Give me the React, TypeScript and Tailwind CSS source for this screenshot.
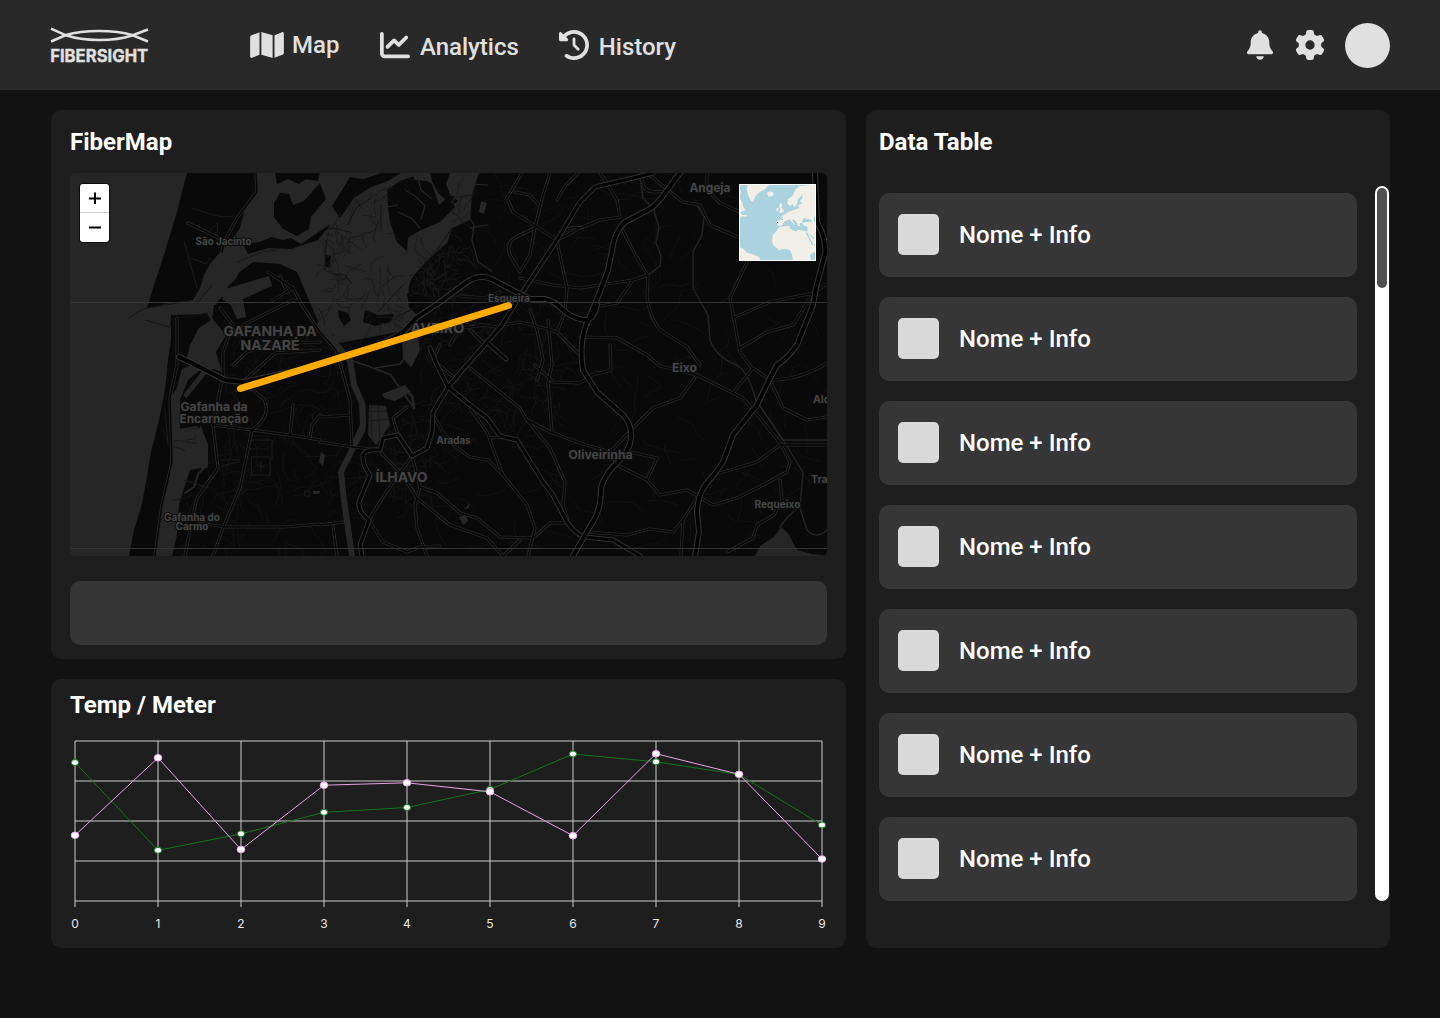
import React from 'react';
import { FaMap, FaChartLine, FaClockRotateLeft, FaBell, FaGear } from 'react-icons/fa6';

type Pt = [number, number];

/* ---------- map data (x/y share the coordinates of the 1440px artboard) ---------- */

const motorways = [
  'M179 357 L192 363 L225 380 L243 382 L300 370 L350 354 L380 345 L403 332 L416 318 L440 302 L467 282 Q482 272 497 282 L520 294 L530 299 L545 299 Q555 301 563 310 Q572 318 584 320 Q594 320 597 305',
  'M680 173 L665 193 Q656 206 648 210 L625 222 Q616 230 613 245 L608 270 L596 302 L586 325 Q579 345 583 370 L597 392 L623 415 Q632 424 631 438 Q630 450 617 463 Q604 475 601 488 Q601 508 594 520 L585 535 L573 556',
  'M815 173 L817 222 Q827 240 825 254 L816 288 L813 305 L797 345 Q788 358 777 365 L770 378 L757 405 L733 435 L723 462 Q716 473 706 484 Q698 494 697 512 L699 532 L695 556',
];

const trunkRoads = [
  'M653 173 L633 178 L595 187 L580 202 L557 240 L522 293 L502 325 L467 365 L448 387 L433 412 L432 432 L427 448 L412 456 L398 435 L383 438 L380 450 Q366 449 363 455 Q362 464 370 475 L359 502 Q358 512 369 520 L360 545 L362 556',
  'M430 348 L437 365 L448 387 L470 405 L487 418 L500 436 L517 440 L543 482 L553 495 L567 522 Q575 534 585 537 L613 540 L640 556',
  'M489 344 L506 359',
];

const minorRoads = [
  'M550 173 L543 195 L535 227 L530 255 L520 272 L510 255 Q505 242 518 236 L537 227',
  'M522 173 L507 198 L513 212 L537 227 L557 240 L562 265 L567 288 L565 312 L557 332 L580 355',
  'M520 278 L553 285 L580 288 L633 280 L648 275',
  'M578 173 L565 186 L557 200 M557 240 L580 228 L600 220 L620 217 L617 200 L605 180 L600 173',
  'M515 192 L530 195 L540 206 M564 231 Q572 226 580 228',
  'M470 368 L520 408 L527 420 L550 432 L580 443 L610 452',
  'M527 420 L550 448 L565 482 L563 505 L568 520',
  'M548 320 L552 365 L548 382 L552 432 M535 365 L553 382 L580 383 L597 372',
  'M433 415 L443 432 L453 445 L470 457 L488 460 L503 475 L527 505 L535 528 L528 556',
  'M470 408 L487 432 L503 475 M490 438 L503 437',
  'M412 456 L400 472 L385 494 L369 520 M380 452 L400 472 L417 498 L450 525 L487 538 L503 556',
  'M412 456 L420 487 L437 493 L460 513 L477 518 L500 537 L533 538 L550 523 L567 523',
  'M420 487 L415 505 L417 528 L427 556 M398 435 L393 418 L407 407',
  'M369 520 L383 542 L407 552 L420 547 L440 546 M503 556 L520 540',
  'M320 417 L350 415 M320 442 L353 447 L380 450 M320 525 L343 522 M333 526 L337 556',
  'M213 425 L252 430 L290 435 L320 440 M252 430 L240 488 L223 528 L213 556',
  'M188 522 L227 527 L285 527 L320 524 M223 375 L213 425 L218 468 L197 498 L193 515 L185 556',
  'M177 318 L177 365 L170 398 L172 462 L162 505 L155 556',
  'M243 382 L264 399 Q272 417 252 430 M310 438 L312 425 L320 415 M293 405 L290 435',
  'M256 173 L257 192 L237 218 L225 240 L222 252 M188 223 L223 240',
  'M268 272 L293 288 L300 302 L320 332 L336 350 L342 370 L350 400 L352 445 M273 300 L293 288 M280 276 L286 290',
  'M220 308 L233 325 L223 352 L223 375 M243 325 L293 300 L300 302 M233 365 L247 352 L270 344 L320 342 M243 382 L275 353 L320 350',
  'M620 225 L637 258 L648 275 L647 298 Q650 318 660 330 L687 347 L700 365',
  'M668 190 L683 202 L700 205 L710 225 L740 238 L747 262 L730 298 L740 352 L752 368',
  'M647 173 L668 190 Q650 195 644 187 L640 173 M707 173 L707 190 L720 203 L740 212',
  'M733 318 L770 302 L813 293 L827 284 M740 348 L767 332 L793 325 L813 293',
  'M595 307 L617 303 L633 280 M580 337 L617 338 L647 355 L660 366 L697 375 L743 398 L760 418 L780 443 L790 462 L787 472 L763 485 L737 498 L713 505 L687 490 L660 495 L647 480 L617 465',
  'M713 475 L757 462 L780 445 L827 445 M697 375 L680 398 L653 408 L633 428 L610 452 L617 465 M630 452 L657 458 L647 480',
  'M587 532 L627 535 L650 529 L673 532 L683 520 L697 498 M683 520 L681 556',
  'M770 380 L783 408 L807 420 L827 417 M733 393 L753 368 L770 380 Q800 380 827 363',
  'M727 552 L753 538 L757 525 L774 515 L782 500 L780 480 M610 345 L611 370 L597 374',
  'M487 325 L460 328 L450 345 M440 345 L433 360 L457 380 M452 320 L502 328 M470 330 L486 345 M460 296 L485 298 L500 292 M485 345 L475 335',
  'M502 325 L520 322 L540 327 L557 332 M530 310 L537 330 L543 360 L537 380',
];

const rivers = [
  'M640 178 L643 198 L654 210 L659 228 L656 243 L661 256 L660 266 L648 275 L647 298 L651 318 L660 330 L687 347 L700 365',
  'M697 205 L704 217 L702 235 L693 252 L693 288 L708 315 L710 340 Q717 358 737 365 Q748 372 756 400 L783 440 L827 440',
  'M756 400 L783 440 L803 472 L800 508 L807 530 Q817 540 827 530',
  'M780 527 L787 518 L797 508',
];

const landMasses = [
  'M187 173 L256 173 L258 190 L244 212 L240 228 L232 240 L222 250 L210 264 L204 275 L200 288 L193 300 L170 303 L147 308 L155 282 L164 255 L176 215 Z',
  'M171 315 L207 314 L211 320 L199 328 L190 345 L187 357 L194 364 L182 369 L176 390 L170 398 L172 440 L169 480 L163 505 L160 530 L155 556 L129 556 L134 530 L142 504 L147 476 L151 452 L159 420 L165 390 L168 360 L171 340 Z',
  'M232 278 L253 262 L280 264 L297 272 L308 298 L320 325 L334 344 L350 341 L397 332 L411 330 L421 316 L410 298 Q405 285 416 273 L430 258 L447 243 L452 228 L470 220 L472 195 L479 173 L827 173 L827 556 L172 556 L177 535 L179 505 L184 488 L190 470 L206 467 L208 445 L200 428 L180 430 L180 400 L188 380 L205 366 L222 372 L216 352 L226 335 L212 318 L214 305 L224 295 Z',
  'M275 173 L320 173 L318 181 L306 179 L299 184 L288 179 L277 184 Z',
  'M274 203 L280 193 L289 194 L293 205 L304 201 L320 183 L326 199 L311 217 L309 229 L297 236 L283 229 L274 217 Z',
  'M243 244 L259 242 L272 237 L283 240 L291 238 L301 244 L323 229 L331 224 L318 240 L291 249 L269 248 L248 254 Z',
  'M222 263 L225 262 L227 266 L222 273 L219 270 Z',
  'M332 206 L344 187 L350 177 L363 179 L382 173 L401 173 L388 181 L371 187 L354 198 L340 218 Z',
  'M387 190 L400 181 L417 175 L432 184 L439 205 L448 197 L455 207 L440 222 L419 231 L408 238 L407 251 L397 242 L390 222 L388 207 Z',
  'M430 173 L450 173 L446 184 L450 194 L458 201 L453 205 L439 194 L432 181 Z',
  'M338 310 L348 313 L351 320 L344 326 L339 318 Z',
  'M365 310 L378 315 L394 314 L391 322 L375 326 L363 322 Z',
  'M325 255 L331 256 L330 268 L325 266 Z',
  'M407 293 L413 294 L416 306 L423 314 L418 316 L409 307 Z',
];

const waterBodies = [
  'M222 290 L269 276 L272 286 L243 299 L246 317 L237 319 L231 305 L223 300 Z',
  'M236 255 L245 262 L235 280 L222 291 L210 300 L198 308 L207 282 L222 262 Z',
  'M201 426 L208 445 L208 467 L202 470 L197 455 L196 430 Z',
  'M369 405 L386 406 L390 425 L376 445 L368 435 Z',
  'M382 394 L405 385 L411 392 L395 401 L384 398 Z',
  'M402 340 L417 332 L420 350 L411 368 L403 358 Z',
  'M321 452 L325 455 L323 466 L319 462 Z',
  'M459 517 L466 515 L468 521 L463 525 Z M464 509 L470 503 L469 508 Z',
  'M755 556 L760 546 L774 537 L781 527 L788 533 L797 550 L812 554 L827 556 Z',
  'M313 491 L320 491 L319 494 L313 494 Z M412 173 L430 173 L426 181 L415 180 Z',
  'M481 201 L487 203 L484 214 L479 212 Z',
];

const labels: { t: string; x: number; y: number; s: number; w: number }[] = [
  { t: 'São Jacinto', x: 223.5, y: 245.3, s: 10, w: 56 },
  { t: 'GAFANHA DA', x: 270, y: 336, s: 13.5, w: 93 },
  { t: 'NAZARÉ', x: 270, y: 350, s: 13.5, w: 59 },
  { t: 'Esqueira', x: 509, y: 301.5, s: 10, w: 42 },
  { t: 'AVEIRO', x: 437.5, y: 332.5, s: 13.5, w: 54 },
  { t: 'Angeja', x: 710, y: 192, s: 12, w: 41 },
  { t: 'Gafanha da', x: 214, y: 411, s: 11.5, w: 67 },
  { t: 'Encarnação', x: 214, y: 423, s: 11.5, w: 69 },
  { t: 'Gafanha do', x: 192, y: 520.5, s: 10, w: 56 },
  { t: 'Carmo', x: 192, y: 530, s: 10, w: 33 },
  { t: 'Aradas', x: 453.5, y: 443.5, s: 10.5, w: 34 },
  { t: 'ÍLHAVO', x: 401.5, y: 482.3, s: 13.5, w: 52 },
  { t: 'Eixo', x: 684.5, y: 372, s: 11.5, w: 25 },
  { t: 'Oliveirinha', x: 600.5, y: 459, s: 12, w: 64 },
  { t: 'Requeixo', x: 777.5, y: 507.5, s: 10.5, w: 46 },
];

/* Deterministic short street segments that fill the built-up areas. */
function streets(seed: number, count: number, x0: number, y0: number, x1: number, y1: number, step: number): string {
  let s = seed;
  const rnd = () => {
    s = (s * 16807) % 2147483647;
    return s / 2147483647;
  };
  let d = '';
  for (let i = 0; i < count; i++) {
    let x = x0 + rnd() * (x1 - x0);
    let y = y0 + rnd() * (y1 - y0);
    let a = (Math.floor(rnd() * 4) * Math.PI) / 2 + 0.5 + (rnd() - 0.5) * 0.5;
    d += `M${x.toFixed(1)} ${y.toFixed(1)}`;
    const n = 2 + Math.floor(rnd() * 4);
    for (let k = 0; k < n; k++) {
      a += (rnd() - 0.5) * 1.3;
      x += Math.cos(a) * step * (0.4 + rnd());
      y += Math.sin(a) * step * (0.4 + rnd());
      d += `L${x.toFixed(1)} ${y.toFixed(1)}`;
    }
  }
  return d;
}

const faintStreets = [
  streets(11, 190, 430, 180, 820, 550, 9),
  streets(29, 70, 225, 320, 335, 410, 7),
  streets(41, 60, 225, 425, 345, 550, 8),
  streets(53, 110, 420, 310, 560, 420, 6),
  streets(67, 60, 370, 430, 440, 510, 7),
  streets(71, 26, 185, 400, 245, 550, 7),
].join('');

const marshLines = [
  streets(5, 26, 325, 228, 352, 272, 5),
  streets(7, 26, 330, 270, 395, 310, 5),
  streets(13, 70, 416, 250, 462, 300, 4.5),
  streets(17, 18, 350, 195, 395, 240, 5),
  streets(19, 16, 370, 290, 405, 330, 5),
  streets(23, 12, 458, 180, 476, 270, 4),
].join('');

function FiberMap() {
  return (
    <div className="relative h-[383px] w-[757px] overflow-hidden rounded-[5px] bg-[#262626]">
      <svg className="block h-full w-full" viewBox="70 173 757 383" fill="none" strokeLinejoin="round" strokeLinecap="round">
        <g fill="#090909">
          {landMasses.map((d) => <path key={d} d={d} />)}
        </g>
        <path d={faintStreets} stroke="#141414" strokeWidth="0.8" />
        <g stroke="#262626">
          <path d="M320 325 L340 349 L350 360 L354 385 L362 403 L363 425 L352 450 L341 472 L344 500 L352 556" strokeWidth="6" />
          <path d="M363 405 L363 430 L356 443" strokeWidth="5" />
          <path d="M350 360 L368 366 L391 375 L401 390 L414 408 M375 368 L400 364 L411 350" strokeWidth="1.6" />
          <path d="M404 389 L412 396 L414 408" strokeWidth="2.5" />
          <path d="M178 430 L197 427 M205 467 L198 474 L194 487 L185 493 M197 456 L188 460" strokeWidth="2" />
          <path d="M186 395 L203 374 L212 366" strokeWidth="5" />
        </g>
        <g fill="#262626">
          {waterBodies.map((d) => <path key={d} d={d} />)}
        </g>
        <path d="M368 412 L388 411 M371 405 L372 440 M368 421 L389 419 M378 406 L380 438" stroke="#141414" strokeWidth="0.8" />
        <path d="M128 319 L145 311 L172 306 L215 303" stroke="#262626" strokeWidth="4" />
        <path d="M128 319 L137 312 L147 308 L190 301 M145 320 L170 327 L171 319 L208 313 M198 302 L212 285 M238 262 L262 252 L276 250" stroke="#111" strokeWidth="0.8" />
        <path d={marshLines} stroke="#191919" strokeWidth="0.8" />
        <path d="M325 230 L332 228 L350 232 M326 240 L325 270 L332 274 L345 275 L352 284 M348 225 L356 208 L371 198 M381 205 L381 228 M416 273 L437 250 L452 228 M403 285 L378 312 M395 318 L420 305" stroke="#131313" strokeWidth="1" />
        <path d="M463 175 L460 190 L452 202 L466 213 L474 225 L472 240 L478 262 L492 271 M470 184 L488 185 M470 228 L488 225" stroke="#262626" strokeWidth="1.2" />
        <path d="M385 198 L388 207 L398 205 M417 175 L421 190 L432 199 M405 190 L415 196 L425 206 L421 219 M398 212 L411 218 L420 228 M378 196 L380 230 L388 243" stroke="#242424" strokeWidth="1.2" />
        <g stroke="#1c1c1c" strokeWidth="1">
          <path d="M192 208 L213 215 L223 217 L233 216 M184 241 L197 288 M191 258 L206 264 L210 258 M208 232 L218 223 L216 241" />
          <path d="M252 457 H270 V475 H252 Z M257 466 H265 M261 461 V471 M250 440 L272 440 V460 M220 460 H240 M222 466 L238 462" />
          <path d="M184 480 L208 488 M165 410 L168 445 M305 491 h5 v5 h-5 z" />
        </g>
        <g stroke="#242424" strokeWidth="1.4">
          {rivers.map((d) => <path key={d} d={d} />)}
        </g>
        {minorRoads.map((d) => <path key={d} d={d} stroke="#262626" strokeWidth="3.2" />)}
        {minorRoads.map((d) => <path key={`c${d}`} d={d} stroke="#060606" strokeWidth="1.5" />)}
        {trunkRoads.map((d) => <path key={d} d={d} stroke="#2e2e2e" strokeWidth="5" />)}
        {trunkRoads.map((d) => <path key={`c${d}`} d={d} stroke="#020202" strokeWidth="3" />)}
        {motorways.map((d) => <path key={d} d={d} stroke="#303030" strokeWidth="6" />)}
        {motorways.map((d) => <path key={`c${d}`} d={d} stroke="#010101" strokeWidth="3.8" />)}
        <path d="M70 302.5 H827 M70 548.5 H827" stroke="#333333" strokeWidth="1" />
        <g
          className="font-['Inter'] font-bold"
          fill="#454545"
          stroke="#0e0e0e"
          strokeWidth="2"
          textAnchor="middle"
          style={{ paintOrder: 'stroke' }}
        >
          {labels.map((l) => (
            <text key={l.t} x={l.x} y={l.y} fontSize={l.s} textLength={l.w} lengthAdjust="spacingAndGlyphs">{l.t}</text>
          ))}
          <text x="813" y="402.5" fontSize="10.5" textAnchor="start">Alq</text>
          <text x="811" y="482.5" fontSize="10.5" textAnchor="start">Trav</text>
        </g>
        <path d="M240.5 388.5 L508.5 305.5" stroke="#ffab00" strokeWidth="7" />
      </svg>
      <div className="absolute left-[10px] top-[11px] flex h-[58px] w-[29px] flex-col rounded-[3px] bg-white shadow-[0_0_0_1px_#00000099]">
        <button className="flex h-[29px] items-center justify-center border-b border-[#ccc]">
          <svg className="h-3 w-3" viewBox="0 0 12 12" stroke="#000" strokeWidth="2"><path d="M0 6.5H12M6 0.5V12" /></svg>
        </button>
        <button className="flex h-[29px] items-center justify-center">
          <svg className="h-3 w-3" viewBox="0 0 12 12" stroke="#000" strokeWidth="2"><path d="M0 5.5H12" /></svg>
        </button>
      </div>
      <Overview />
    </div>
  );
}

function Overview() {
  return (
    <svg className="absolute left-[669px] top-[11px] h-[77px] w-[77px]" viewBox="477 57 231 231">
      <rect x="477" y="57" width="231" height="231" fill="#aad3df" />
      <g fill="#f2efe9">
        <path d="M504 57 L500 70 L505 92 L513 108 L519 110 L527 92 L540 80 L556 72 L562 64 L575 57 Z" />
        <path d="M560 84 L572 79 L582 84 L578 93 L566 95 Z" />
        <path d="M477 75 L483 77 L482 88 L477 90 Z M477 98 L486 110 L490 126 L497 136 L489 138 L480 142 L487 150 L502 149 L499 155 L485 154 L477 164 Z" />
        <path d="M600 114 L606 118 L605 128 L612 138 L605 143 L596 143 L601 134 L597 126 Z M590 129 L597 130 L594 139 L588 138 Z" />
        <path d="M708 57 L675 62 L657 64 L645 76 L637 93 L624 102 L622 116 L631 123 L637 116 L643 127 L652 115 L653 104 L666 90 L668 99 L659 109 L668 114 L655 121 L657 129 L644 134 L628 139 L614 148 L604 154 L610 164 L592 166 L591 180 L599 184 L606 181 L612 171 L621 165 L628 163 L640 178 L645 179 L637 166 L641 163 L652 175 L654 184 L661 183 L660 175 L667 174 L670 182 L681 184 L683 193 L680 201 L690 222 L699 237 L708 238 Z" />
        <path d="M597 187 L612 184 L628 183 L631 192 L648 200 L654 194 L680 199 L680 206 L698 237 L708 241 L708 268 L692 288 L639 288 L636 270 L631 255 L611 251 L597 256 L580 241 L576 229 L578 211 L588 200 Z" />
        <path d="M477 245 L491 251 L501 263 L518 268 L538 277 L541 288 L477 288 Z" />
      </g>
      <g fill="#aad3df">
        <path d="M666 166 L674 158 L680 163 L690 162 L697 170 L681 171 L668 173 Z M703 154 L708 154 L708 177 L701 168 Z" />
        <path d="M677 202 L682 203 L700 239 L697 242 Z M690 270 L700 262 L708 263 L708 288 L693 288 Z M690 207 L704 220 L701 222 L692 213 Z" />
      </g>
      <rect x="591" y="171" width="3" height="3" fill="#334" />
      <rect x="478.5" y="58.5" width="228" height="228" fill="none" stroke="#fff" strokeWidth="3" />
    </svg>
  );
}

/* ---------- chart ---------- */

const green: Pt[] = [[75, 762.5], [158, 850.3], [241, 833.8], [324, 812.3], [407, 807.5], [490, 789.5], [573, 754], [656, 761.8], [739, 774.5], [822, 825]];
const pink: Pt[] = [[75, 835.3], [158, 757.8], [241, 849.5], [324, 785.2], [407, 782.8], [490, 791.8], [573, 835.7], [656, 753.7], [739, 774.3], [822, 859]];

function TempChart() {
  return (
    <svg className="block h-[200px] w-[771px]" viewBox="66 735 771 200" fill="none">
      <g stroke="#cccccc" strokeWidth="1">
        {[741, 781, 821, 861, 901].map((y) => <path key={y} d={`M75 ${y}H822`} />)}
        {green.map(([x]) => <path key={x} d={`M${x} 741V907`} />)}
      </g>
      <polyline points={green.map((p) => p.join(',')).join(' ')} stroke="#15751f" />
      {green.map(([x, y]) => <ellipse key={x} cx={x} cy={y} rx="3.6" ry="3" fill="#fff" stroke="#15802a" />)}
      <polyline points={pink.map((p) => p.join(',')).join(' ')} stroke="#e6a3e4" />
      {pink.map(([x, y]) => <ellipse key={x} cx={x} cy={y} rx="3.8" ry="3.3" fill="#fff" stroke="#e9a9e9" />)}
      <g className="font-['Inter']" fill="#e8e8e8" fontSize="12" textAnchor="middle">
        {green.map(([x], i) => <text key={x} x={x} y="927.5">{i}</text>)}
      </g>
    </svg>
  );
}

/* ---------- page ---------- */

function Logo() {
  return (
    <svg className="h-10 w-[100px]" viewBox="50 25 100 40" fill="none" stroke="#e0e0e0">
      <path d="M51 28.7 L66 35.3 C84 41.5 114 41.5 132 35.5 L148 29.5" strokeWidth="2.5" />
      <path d="M51 41.5 L66 35 C84 29.5 114 29.5 132 35 L148 41.5" strokeWidth="2.5" />
      <text x="50.2" y="62" className="font-['Inter'] font-bold" fontSize="17" textLength="98" lengthAdjust="spacingAndGlyphs" fill="#e0e0e0" stroke="#e0e0e0" strokeWidth="0.35">
        FIBERSIGHT
      </text>
    </svg>
  );
}

export default function App() {
  return (
    <div className="flex h-[1018px] w-[1440px] flex-col overflow-hidden bg-[#121212] font-['Roboto',sans-serif] text-white">
      <header className="flex h-[90px] shrink-0 items-center bg-[#292929] pl-[50px] pr-[50px] text-2xl font-medium text-[#e0e0e0]">
        <Logo />
        <nav className="ml-[100px] flex items-center">
          <a className="flex items-center gap-2">
            <FaMap className="h-[30px] w-[34px]" />
            <span>Map</span>
          </a>
          <a className="ml-[40.5px] flex items-center gap-[10px]">
            <FaChartLine className="h-[30px] w-[30px]" />
            <span className="pt-1">Analytics</span>
          </a>
          <a className="ml-10 flex items-center gap-[10px]">
            <FaClockRotateLeft className="h-[30px] w-[30px]" />
            <span className="pt-1">History</span>
          </a>
        </nav>
        <div className="ml-auto flex items-center">
          <FaBell className="h-[30px] w-[26px]" />
          <FaGear className="ml-[22px] h-[30px] w-[30px]" />
          <div className="ml-5 h-[45px] w-[45px] rounded-full bg-[#e0e0e0]" />
        </div>
      </header>

      <main className="flex gap-5 pl-[51px] pt-5">
        <div className="flex w-[795px] flex-col gap-5">
          <section className="h-[549px] rounded-[10px] bg-[#1e1e1e] px-[19px]">
            <h2 className="flex h-[63px] items-center text-2xl font-bold">FiberMap</h2>
            <FiberMap />
            <div className="mt-[25px] h-16 rounded-[10px] bg-[#363636]" />
          </section>
          <section className="h-[269px] rounded-[10px] bg-[#1e1e1e]">
            <h2 className="flex h-[56px] items-center pl-[19px] pb-1 text-2xl font-bold">Temp / Meter</h2>
            <div className="pl-[15px]">
              <TempChart />
            </div>
          </section>
        </div>

        <section className="h-[838px] w-[524px] rounded-[10px] bg-[#1e1e1e] pl-[13px]">
          <h2 className="flex h-[63px] items-center text-2xl font-bold">Data Table</h2>
          <div className="flex">
            <ul className="mt-5 flex w-[478px] flex-col gap-5">
              {Array.from({ length: 7 }, (_, i) => (
                <li key={i} className="flex h-[84px] items-center gap-5 rounded-[10px] bg-[#363636] pl-[19px]">
                  <div className="mb-0.5 h-[41px] w-[41px] rounded-[5px] bg-[#d9d9d9]" />
                  <span className="text-2xl font-medium">Nome + Info</span>
                </li>
              ))}
            </ul>
            <div className="ml-[18px] mt-[13px] h-[715px] w-[14px] rounded-full bg-white p-[2px]">
              <div className="h-[100px] rounded-full bg-[#505050]" />
            </div>
          </div>
        </section>
      </main>
    </div>
  );
}
